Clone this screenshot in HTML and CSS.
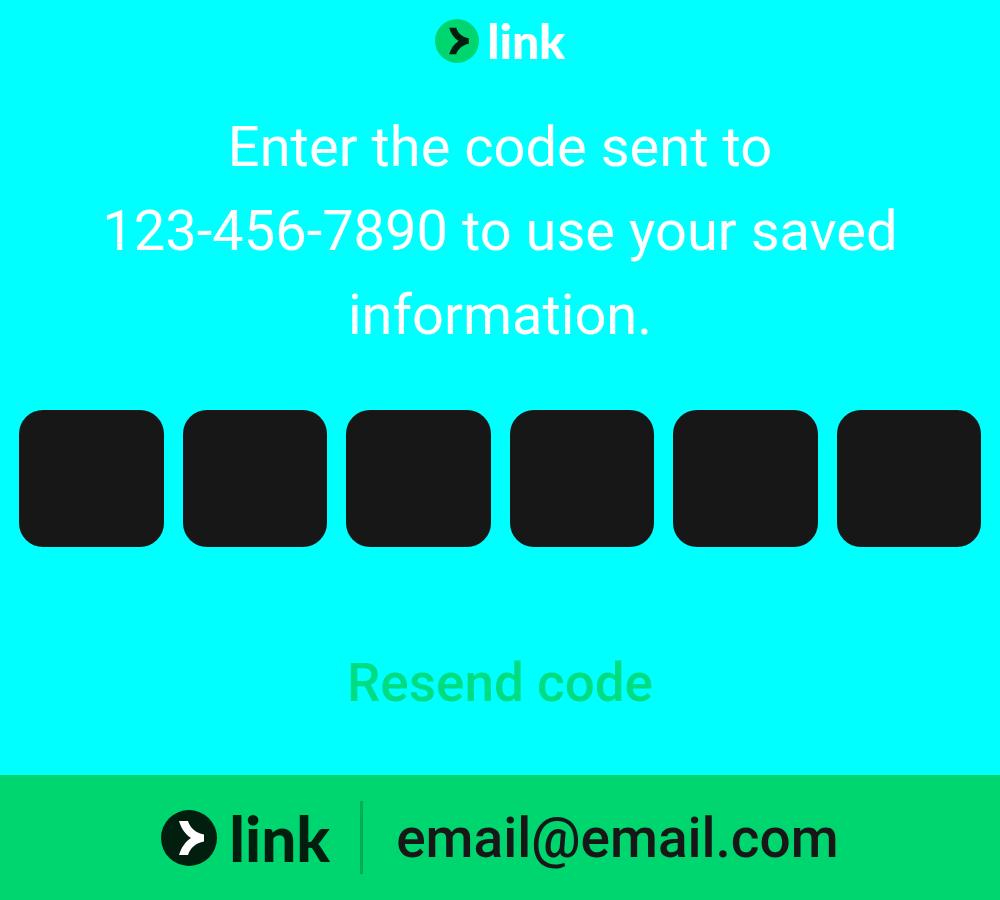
FILE: index.html
```html
<!DOCTYPE html>
<html lang="en">
<head>
<meta charset="utf-8">
<meta name="viewport" content="width=device-width, initial-scale=1">
<title>Link verification</title>
<link rel="stylesheet" href="styles.css">
</head>
<body>
<main class="verify">
  <div class="logo logo-small">
    <svg class="logo-mark" viewBox="0 0 56 56" aria-hidden="true">
      <circle class="mark-disc" cx="28" cy="28" r="28"/>
      <path class="mark-arrow" d="M18 11H27C29 18 35 23 43 24.5V31.5C35 33 29 38 27 45H18C20 38 24 32 30 28C24 24 20 18 18 11Z"/>
    </svg>
    <span class="logo-word">link</span>
  </div>
  <h1 class="prompt" id="prompt">Enter the code sent to<br>123-456-7890 to use your saved<br>information.</h1>
  <form class="code" aria-labelledby="prompt">
    <input class="digit" type="text" inputmode="numeric" maxlength="1" aria-label="Digit 1">
    <input class="digit" type="text" inputmode="numeric" maxlength="1" aria-label="Digit 2">
    <input class="digit" type="text" inputmode="numeric" maxlength="1" aria-label="Digit 3">
    <input class="digit" type="text" inputmode="numeric" maxlength="1" aria-label="Digit 4">
    <input class="digit" type="text" inputmode="numeric" maxlength="1" aria-label="Digit 5">
    <input class="digit" type="text" inputmode="numeric" maxlength="1" aria-label="Digit 6">
  </form>
  <button class="resend" type="button">Resend code</button>
</main>
<footer class="account">
  <div class="logo logo-large">
    <svg class="logo-mark" viewBox="0 0 56 56" aria-hidden="true">
      <circle class="mark-disc" cx="28" cy="28" r="28"/>
      <path class="mark-arrow" d="M18 11H27C29 18 35 23 43 24.5V31.5C35 33 29 38 27 45H18C20 38 24 32 30 28C24 24 20 18 18 11Z"/>
    </svg>
    <span class="logo-word">link</span>
  </div>
  <span class="divider"></span>
  <span class="email">email@email.com</span>
</footer>
</body>
</html>
```

FILE: styles.css
```css
* {
  box-sizing: border-box;
}

body {
  margin: 0;
  min-height: 100vh;
  display: flex;
  flex-direction: column;
  background: #00ffff;
  font-family: Roboto, sans-serif;
}

.verify {
  flex: 1;
  display: flex;
  flex-direction: column;
  align-items: center;
  padding: 16px 19px 0;
}

.logo {
  display: flex;
  align-items: center;
}

.logo-word {
  font-family: Lato, sans-serif;
  font-weight: 900;
}

.logo-small {
  gap: 8px;
  height: 50px;
  color: #ffffff;
}

.logo-small .logo-mark {
  width: 44px;
  height: 44px;
}

.logo-small .mark-disc {
  fill: #00d66f;
}

.logo-small .mark-arrow {
  fill: #011e0f;
}

.logo-small .logo-word {
  font-size: 48px;
  line-height: 50px;
}

.logo-large {
  gap: 12px;
  color: #011e0f;
}

.logo-large .logo-mark {
  width: 56px;
  height: 56px;
}

.logo-large .mark-disc {
  fill: #011e0f;
}

.logo-large .mark-arrow {
  fill: #ffffff;
}

.logo-large .logo-word {
  font-size: 62px;
  line-height: 64px;
}

.prompt {
  margin: 39px 0 0;
  color: #ffffff;
  font-size: 56px;
  font-weight: 400;
  line-height: 84px;
  text-align: center;
}

.code {
  display: grid;
  grid-template-columns: repeat(6, 1fr);
  gap: 19px;
  width: 100%;
  margin-top: 53px;
}

.digit {
  width: 100%;
  height: 137px;
  padding: 0;
  border: 0;
  border-radius: 24px;
  background: #171717;
  color: #ffffff;
  font: 400 56px Roboto, sans-serif;
  text-align: center;
}

.resend {
  margin-top: 94px;
  padding: 0;
  border: 0;
  background: none;
  color: #00dc82;
  font: 500 53px/84px Roboto, sans-serif;
  cursor: pointer;
}

.account {
  display: flex;
  align-items: center;
  justify-content: center;
  min-height: 125px;
  background: #00d66f;
}

.divider {
  width: 3px;
  height: 73px;
  margin: 0 33px 0 30px;
  background: #00ab59;
}

.email {
  color: #171717;
  font-size: 55px;
  font-weight: 500;
  line-height: 84px;
}
```
